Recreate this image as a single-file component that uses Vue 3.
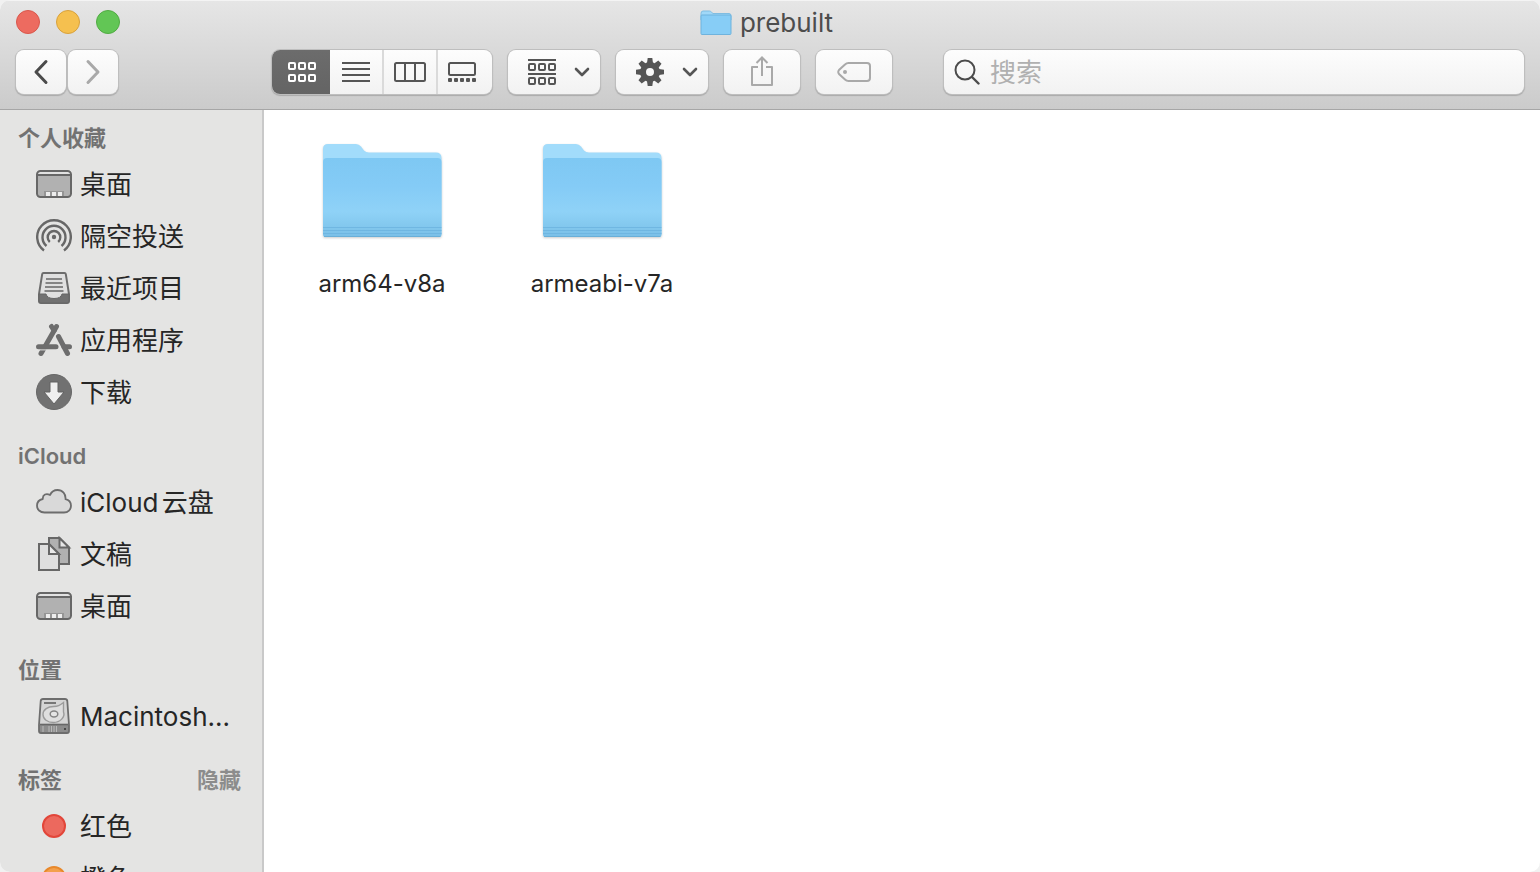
<script setup>
import { ref } from 'vue'

const view = ref('icons')
const views = [
  { id: 'icons', label: '图标' },
  { id: 'list', label: '列表' },
  { id: 'columns', label: '分栏' },
  { id: 'gallery', label: '画廊' },
]

const sections = [
  {
    title: '个人收藏',
    items: [
      { name: '桌面', icon: 'desktop' },
      { name: '隔空投送', icon: 'airdrop' },
      { name: '最近项目', icon: 'recents' },
      { name: '应用程序', icon: 'apps' },
      { name: '下载', icon: 'downloads' },
    ],
  },
  {
    title: 'iCloud',
    items: [
      { name: 'iCloud云盘', icon: 'cloud' },
      { name: '文稿', icon: 'documents' },
      { name: '桌面', icon: 'desktop' },
    ],
  },
  { title: '位置', items: [{ name: 'Macintosh...', icon: 'disk' }] },
  {
    title: '标签',
    action: '隐藏',
    items: [
      { name: '红色', icon: 'tag', fill: '#ec695e', stroke: '#e2463a' },
      { name: '橙色', icon: 'tag', fill: '#f3a04c', stroke: '#e8882b' },
    ],
  },
]

const folders = ['arm64-v8a', 'armeabi-v7a']
const teeth = [0, 45, 90, 135, 180, 225, 270, 315]
</script>

<template>
  <div class="window">
    <header class="chrome">
      <div class="titlebar">
        <div class="lights">
          <button class="light close" aria-label="关闭"></button>
          <button class="light minimize" aria-label="最小化"></button>
          <button class="light zoom" aria-label="缩放"></button>
        </div>
        <h1 class="title">
          <svg width="32" height="26" viewBox="0 0 32 26" aria-hidden="true">
            <path d="M1 3.500Q1 1 3 1H9.500Q10.500 1 11.500 2.200L13 3.500H29Q31 3.500 31 5.500V10H1Z" fill="#a0d8f8" stroke="#7fbde2" />
            <rect x="1" y="5" width="30" height="19.500" rx="1" fill="#87cdf6" stroke="#6fb3dd" />
          </svg>
          <span>prebuilt</span>
        </h1>
      </div>

      <div class="toolbar" role="toolbar">
        <div class="nav">
          <button class="btn step" aria-label="返回">
            <svg width="16" height="26" viewBox="0 0 16 26"><path d="M13 2.500 3 13 13 23.500" fill="none" stroke="#4b4b4b" stroke-width="3" stroke-linecap="round" stroke-linejoin="round" /></svg>
          </button>
          <button class="btn step" aria-label="前进">
            <svg width="16" height="26" viewBox="0 0 16 26"><path d="M3 2.500 13 13 3 23.500" fill="none" stroke="#a9a9a9" stroke-width="3" stroke-linecap="round" stroke-linejoin="round" /></svg>
          </button>
        </div>

        <div class="segments">
          <button
            v-for="v in views"
            :key="v.id"
            class="segment"
            :class="{ active: view === v.id }"
            :aria-label="v.label"
            :aria-pressed="view === v.id"
            @click="view = v.id"
          >
            <svg v-if="v.id === 'icons'" width="28" height="20" viewBox="0 0 28 20" fill="none" stroke="currentColor" stroke-width="2">
              <template v-for="y in [1, 13]" :key="y">
                <rect v-for="x in [1, 11, 21]" :key="x" :x="x" :y="y" width="6" height="6" rx="1" />
              </template>
            </svg>
            <svg v-else-if="v.id === 'list'" width="28" height="20" viewBox="0 0 28 20" stroke="currentColor" stroke-width="2">
              <path d="M0 1H28M0 7H28M0 13H28M0 19H28" />
            </svg>
            <svg v-else-if="v.id === 'columns'" width="32" height="20" viewBox="0 0 32 20" fill="none" stroke="currentColor" stroke-width="2">
              <rect x="1" y="1" width="30" height="18" rx="1.500" /><path d="M11 1V19M21 1V19" />
            </svg>
            <svg v-else width="28" height="20" viewBox="0 0 28 20">
              <rect x="1" y="1" width="26" height="12" rx="1.500" fill="none" stroke="currentColor" stroke-width="2" />
              <rect v-for="x in [0, 6, 12, 18, 24]" :key="x" :x="x" y="16" width="4" height="4" rx="1" fill="currentColor" />
            </svg>
          </button>
        </div>

        <button class="btn menu" aria-label="分组">
          <svg width="28" height="26" viewBox="0 0 28 26" fill="none" stroke="currentColor" stroke-width="2">
            <path d="M0 1H28M0 15H28" />
            <template v-for="y in [5, 19]" :key="y">
              <rect v-for="x in [1, 11, 21]" :key="x" :x="x" :y="y" width="6" height="6" rx="1" />
            </template>
          </svg>
          <svg width="16" height="10" viewBox="0 0 16 10"><path d="M2 2 8 8 14 2" fill="none" stroke="currentColor" stroke-width="2.600" stroke-linecap="round" stroke-linejoin="round" /></svg>
        </button>

        <button class="btn menu" aria-label="操作">
          <svg width="28" height="28" viewBox="-14 -14 28 28">
            <circle r="7" fill="none" stroke="currentColor" stroke-width="6" />
            <path v-for="a in teeth" :key="a" d="M-3-9 -2.300-14H2.300L3-9Z" fill="currentColor" :transform="`rotate(${a})`" />
          </svg>
          <svg width="16" height="10" viewBox="0 0 16 10"><path d="M2 2 8 8 14 2" fill="none" stroke="currentColor" stroke-width="2.600" stroke-linecap="round" stroke-linejoin="round" /></svg>
        </button>

        <button class="btn wide" aria-label="共享">
          <svg class="share" width="22" height="32" viewBox="0 0 22 32" fill="none" stroke="#a9a9a9" stroke-width="2">
            <path d="M7 12H1V30H21V12H15M11 21V3" stroke-linejoin="round" /><path d="M5.500 8 11 2.500 16.500 8" />
          </svg>
        </button>

        <button class="btn wide" aria-label="标签">
          <svg width="34" height="20" viewBox="0 0 34 20">
            <path d="M11.500 1H30Q33 1 33 4V16Q33 19 30 19H11.500Q9.500 19 8 17.500L2 12Q0.500 10 2 8L8 2.500Q9.500 1 11.500 1Z" fill="none" stroke="#a9a9a9" stroke-width="2" />
            <circle cx="8" cy="10" r="2" fill="#a9a9a9" />
          </svg>
        </button>

        <label class="search">
          <svg width="26" height="26" viewBox="0 0 26 26" fill="none" stroke="#4b4b4b" stroke-width="2">
            <circle cx="11" cy="11" r="9.500" /><path d="M18 18 24.500 24.500" stroke-width="2.400" stroke-linecap="round" />
          </svg>
          <input type="search" placeholder="搜索" aria-label="搜索" />
        </label>
      </div>
    </header>

    <div class="body">
      <nav class="sidebar">
        <section v-for="s in sections" :key="s.title" class="group">
          <div class="heading">
            <h2>{{ s.title }}</h2>
            <button v-if="s.action" class="hide">{{ s.action }}</button>
          </div>
          <ul>
            <li v-for="item in s.items" :key="item.name">
              <a href="#" class="place">
                <svg width="36" height="36" viewBox="0 0 36 36" aria-hidden="true">
                  <g v-if="item.icon === 'desktop'">
                    <rect x="1" y="5" width="34" height="26" rx="3.500" fill="#e2e2e2" />
                    <path d="M1 9H35V28Q35 31 32 31H4Q1 31 1 28Z" fill="#b1b1b1" />
                    <rect x="8" y="25" width="20" height="6" fill="#959595" />
                    <path d="M10 26H14V30H10ZM16 26H20V30H16ZM22 26H26V30H22Z" fill="#ededed" />
                    <path d="M1 9H35" stroke="#676767" stroke-width="2" />
                    <rect x="1" y="5" width="34" height="26" rx="3.500" fill="none" stroke="#676767" stroke-width="2" />
                  </g>
                  <g v-else-if="item.icon === 'airdrop'" fill="none" stroke="#676767" stroke-width="2.400">
                    <path d="M8 32.500A16.800 16.800 0 1 1 28 32.500" />
                    <path d="M10.500 28A11.500 11.500 0 1 1 25.500 28" />
                    <path d="M13.800 24A6.300 6.300 0 1 1 22.200 24" />
                    <circle cx="18" cy="19" r="2.200" fill="#676767" stroke="none" />
                  </g>
                  <g v-else-if="item.icon === 'recents'">
                    <path d="M7.500 3H28.500Q29.600 3 29.800 4.200L33 24V31Q33 33 31 33H5Q3 33 3 31V24L6.200 4.200Q6.400 3 7.500 3Z" fill="#e0e0e0" stroke="#6d6d6d" stroke-width="2" />
                    <path d="M3 24H10Q11 28.500 18 28.500T26 24H33V31Q33 33 31 33H5Q3 33 3 31Z" fill="#717171" stroke="#676767" />
                    <path d="M10 9H26M9.500 13H26.500M9 17H27M8.500 21H27.500" stroke="#858585" stroke-width="2" />
                  </g>
                  <g v-else-if="item.icon === 'apps'" fill="none" stroke="#6d6d6d" stroke-width="5" stroke-linecap="round">
                    <path d="M20.500 4.500 5 31.500" />
                    <path d="M2 27.800H13" stroke="#e4e4e3" stroke-width="1.200" stroke-linecap="butt" />
                    <path d="M2.500 24.700H20" />
                    <path d="M28 24.700H33.500" />
                    <path d="M15.500 4.500 18 8.500" />
                    <path d="M22.500 14.500 31.500 31.500" />
                  </g>
                  <g v-else-if="item.icon === 'downloads'">
                    <circle cx="18" cy="18" r="17.500" fill="#717171" stroke="#676767" />
                    <path d="M14 8H22V18H28L18 30 8 18H14Z" fill="#efefef" stroke="#626262" />
                  </g>
                  <path v-else-if="item.icon === 'cloud'" d="M8.500 28.500C4 28.500 1 25.500 1 21.700 1 18.300 3.500 15.700 6.800 15 6.500 10.500 10.500 9 14 11 15.500 7.800 18.300 6 21.500 6 26.500 6 30 10 29.500 15.200 33 16 35 18.500 35 21.800 35 25.600 32 28.500 28 28.500Z" fill="#d9d9d9" stroke="#6d6d6d" stroke-width="1.800" stroke-linejoin="round" />
                  <g v-else-if="item.icon === 'documents'" stroke="#676767" stroke-width="2">
                    <path d="M13 2H23.500L33 11.500V28H13Z" fill="#b1b1b1" />
                    <path d="M23.500 2V11.500H33Z" fill="#e6e6e6" />
                    <path d="M3 8H13L23 18V34H3Z" fill="#dfdfdf" />
                    <path d="M13 8V18H23Z" fill="#e9e9e9" />
                  </g>
                  <g v-else-if="item.icon === 'disk'">
                    <path d="M7 1H29Q31 1 31.300 3L33 27V33Q33 35 31 35H5Q3 35 3 33V27L4.700 3Q5 1 7 1Z" fill="#d5d5d5" />
                    <path d="M3 27H33V33Q33 35 31 35H5Q3 35 3 33Z" fill="#8c8c8c" />
                    <path d="M8 5H20" stroke="#777" stroke-width="2" />
                    <path d="M27.500 4.500V14C29.500 19 24 24.500 17.500 24.500 11.500 24.500 7 21 7 16.500 7 11.500 12 8.500 17.500 8.500 22 8.500 23.500 7.500 27.500 4.500Z" fill="#dedede" stroke="#9b9b9b" stroke-width="1.400" />
                    <ellipse cx="18" cy="16" rx="3.800" ry="3" fill="#e5e5e5" stroke="#858585" stroke-width="1.500" />
                    <path d="M7 28V34M13 28V34M15.500 28V34M18 28V34M20.500 28V34" stroke="#b9b9b9" />
                    <circle cx="29" cy="31" r="1" fill="#333" />
                    <path d="M4 26.500H32" stroke="#676767" stroke-width="1.600" />
                    <path d="M7 1H29Q31 1 31.300 3L33 27V33Q33 35 31 35H5Q3 35 3 33V27L4.700 3Q5 1 7 1Z" fill="none" stroke="#6d6d6d" stroke-width="1.800" />
                  </g>
                  <circle v-else cx="18" cy="18" r="11" :fill="item.fill" :stroke="item.stroke" stroke-width="2" />
                </svg>
                <span>{{ item.name }}</span>
              </a>
            </li>
          </ul>
        </section>
      </nav>

      <main class="files">
        <a v-for="name in folders" :key="name" href="#" class="folder">
          <svg width="124" height="100" viewBox="0 0 124 100" aria-hidden="true">
            <defs>
              <linearGradient :id="`face-${name}`" x1="0" y1="0" x2="0" y2="1">
                <stop offset="0" stop-color="#7ec8f3" />
                <stop offset="0.350" stop-color="#84cbf6" />
                <stop offset="0.680" stop-color="#8fd2f7" />
                <stop offset="0.860" stop-color="#83c8ee" />
                <stop offset="1" stop-color="#7abfe7" />
              </linearGradient>
            </defs>
            <path d="M3 7Q3 2 8 2H36Q39 2 41 4.500L44 8.500Q46 10.500 49 10.500H116Q121.500 10.500 121.500 16V92Q121.500 95 118.500 95H6Q3 95 3 92Z" fill="#a2dcfb" />
            <path :fill="`url(#face-${name})`" d="M3 20Q3 16 7 16H117.500Q121.500 16 121.500 20V92Q121.500 95 118.500 95H6Q3 95 3 92Z" />
            <path d="M3 85.500H121.500M3 88.500H121.500M3 91.500H121.500" stroke="#6cb3df" stroke-opacity="0.800" />
            <path d="M4 94.500H120.500" stroke="#69afd8" />
          </svg>
          <span>{{ name }}</span>
        </a>
      </main>
    </div>
  </div>
</template>

<style>
body {
  background: #f1f1f1;
}
</style>

<style scoped>
* {
  box-sizing: border-box;
}
.window {
  display: flex;
  flex-direction: column;
  height: 100vh;
  overflow: hidden;
  border-radius: 10px;
  background: #fff;
  color: #262626;
  font-family: Inter, "Noto Sans CJK SC", sans-serif;
  font-size: 26px;
  text-autospace: normal;
}
button {
  padding: 0;
  border: 0;
  font: inherit;
  color: inherit;
}
svg {
  display: block;
  flex: none;
}
a {
  color: inherit;
  text-decoration: none;
}
.chrome {
  flex: none;
  padding-bottom: 15px;
  border-bottom: 1px solid #a6a6a6;
  background: linear-gradient(#e6e6e6, #cbcbcb);
  box-shadow: inset 0 1px #f4f4f4;
}
.titlebar {
  display: grid;
  grid-template-columns: 1fr auto 1fr;
  align-items: center;
  height: 50px;
  padding: 0 16px 6px;
}
.lights {
  display: flex;
  gap: 16px;
}
.light {
  width: 24px;
  height: 24px;
  border: 1px solid;
  border-radius: 50%;
}
.close {
  background: #ed6b60;
  border-color: #d9574c;
}
.minimize {
  background: #f5c04f;
  border-color: #d8a13c;
}
.zoom {
  background: #62c655;
  border-color: #51ab43;
}
.title {
  display: flex;
  align-items: center;
  gap: 8px;
  margin: 0;
  padding: 2px 7px 0 0;
  color: #4d4d4d;
  font-size: 26px;
  font-weight: 400;
  line-height: 32px;
}
.toolbar {
  display: flex;
  align-items: center;
  gap: 16px;
  padding: 0 16px;
  color: #555;
}
.nav {
  display: flex;
  gap: 2px;
  margin-right: 138px;
}
.btn,
.segments,
.search {
  height: 44px;
  border-radius: 8px;
  background: linear-gradient(#fdfdfd, #f2f2f2);
  box-shadow: 0 0 0 1px #bebebe, 0 1px 1px 1px #aaa;
}
.btn {
  display: flex;
  align-items: center;
  justify-content: center;
}
.step {
  width: 50px;
}
.menu {
  width: 92px;
  gap: 18px;
  padding-left: 10px;
}
.wide {
  width: 76px;
}
.share {
  margin-bottom: 2px;
}
.segments {
  display: flex;
  overflow: hidden;
}
.segment {
  display: flex;
  align-items: center;
  justify-content: center;
  width: 54px;
  padding-right: 2px;
  background: none;
}
.segment + .segment:not(:last-child) {
  padding-right: 0;
  border-right: 2px solid #dadada;
}
.segment:last-child {
  padding-right: 6px;
}
.segment.active {
  width: 58px;
  padding: 0 0 0 2px;
  background: linear-gradient(#6c6c6c, #646464);
  color: #fff;
}
.search {
  display: flex;
  flex: 1;
  align-items: center;
  gap: 10px;
  min-width: 0;
  margin-left: 36px;
  padding: 0 10px;
}
.search input {
  flex: 1;
  min-width: 0;
  padding: 2px 0 0;
  border: 0;
  outline: 0;
  background: none;
  color: #262626;
  font: inherit;
  line-height: 40px;
}
.search input::placeholder {
  color: #b0b0b0;
}
.body {
  display: flex;
  flex: 1;
  min-height: 0;
}
.sidebar {
  flex: none;
  width: 264px;
  overflow: hidden;
  border-right: 2px solid #c9c9c9;
  background: #e4e4e3;
}
.heading {
  display: flex;
  justify-content: space-between;
  padding: 18px 21px 0 18px;
  color: #727272;
  font-size: 22px;
  line-height: 40px;
}
.group:first-child .heading {
  padding-top: 8px;
}
.heading h2 {
  margin: 0;
  font-size: 22px;
  font-weight: 600;
}
.hide {
  background: none;
  color: #8c8c8c;
  font-weight: 600;
}
ul {
  margin: 0;
  padding: 0;
  list-style: none;
}
.place {
  display: flex;
  align-items: center;
  gap: 8px;
  height: 52px;
  padding-left: 36px;
  line-height: 40px;
  white-space: nowrap;
}
.place span {
  padding-top: 2px;
}
.files {
  display: flex;
  flex: 1;
  flex-wrap: wrap;
  align-content: flex-start;
  min-width: 0;
  padding: 32px 8px;
}
.folder {
  display: flex;
  flex-direction: column;
  align-items: center;
  gap: 26px;
  width: 220px;
  font-size: 24px;
  line-height: 32px;
}
.folder svg {
  filter: drop-shadow(0 1px 1px #0003);
}
</style>
